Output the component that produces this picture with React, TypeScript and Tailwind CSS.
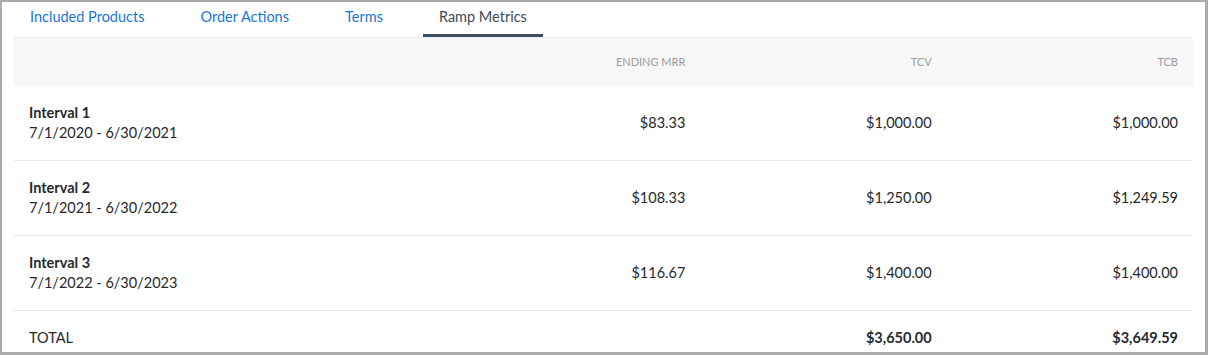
import React, { useState } from "react";

type Interval = {
  label: string;
  range: string;
  endingMrr: string;
  tcv: string;
  tcb: string;
};

const tabs = ["Included Products", "Order Actions", "Terms", "Ramp Metrics"];

const intervals: Interval[] = [
  { label: "Interval 1", range: "7/1/2020 - 6/30/2021", endingMrr: "$83.33", tcv: "$1,000.00", tcb: "$1,000.00" },
  { label: "Interval 2", range: "7/1/2021 - 6/30/2022", endingMrr: "$108.33", tcv: "$1,250.00", tcb: "$1,249.59" },
  { label: "Interval 3", range: "7/1/2022 - 6/30/2023", endingMrr: "$116.67", tcv: "$1,400.00", tcb: "$1,400.00" },
];

const cols = "grid grid-cols-[440px_1fr_1fr_1fr]";

export default function App() {
  const [activeTab, setActiveTab] = useState("Ramp Metrics");

  return (
    <div
      className="w-[1208px] h-[355px] overflow-hidden bg-white border-l-2 border-t-2 border-r-[3px] border-b-[3px] border-[#ababab] px-3 text-[#25292d]"
      style={{ fontFamily: "Lato, 'Open Sans', sans-serif" }}
    >
      {/* Tabs */}
      <div className="flex gap-6 h-[35px]">
        {tabs.map((tab) => {
          const active = tab === activeTab;
          return (
            <button
              key={tab}
              type="button"
              onClick={() => setActiveTab(tab)}
              className={
                active
                  ? "px-4 h-full flex items-start pt-[4px] text-[14.5px] text-[#3f4a56] border-b-[3px] border-[#3d4d60]"
                  : "px-4 h-full flex items-start pt-[4px] text-[14.5px] text-[#1b76d2] border-b-[3px] border-transparent"
              }
            >
              {tab}
            </button>
          );
        })}
      </div>

      {/* Header */}
      <div className={`${cols} h-[49px] items-center bg-[#f7f7f7] border-t border-[#ececec] text-[11px] uppercase text-[#9c9c9c]`}>
        <div />
        <div className="text-right pr-[15px]">Ending MRR</div>
        <div className="text-right pr-[15px]">TCV</div>
        <div className="text-right pr-[15px]">TCB</div>
      </div>

      {/* Interval rows */}
      {intervals.map((row) => (
        <div key={row.label} className={`${cols} h-[75px] items-center border-b border-[#e9e9e9] text-[14.5px]`}>
          <div className="pl-[15px] leading-[20px]">
            <div className="font-bold">{row.label}</div>
            <div>{row.range}</div>
          </div>
          <div className="text-right pr-[15px] -mt-[1px]">{row.endingMrr}</div>
          <div className="text-right pr-[15px] -mt-[1px]">{row.tcv}</div>
          <div className="text-right pr-[15px] -mt-[1px]">{row.tcb}</div>
        </div>
      ))}

      {/* Totals */}
      <div className={`${cols} h-[53px] items-center text-[14.5px]`}>
        <div className="pl-[15px]">TOTAL</div>
        <div />
        <div className="text-right pr-[15px] font-bold">$3,650.00</div>
        <div className="text-right pr-[15px] font-bold">$3,649.59</div>
      </div>
    </div>
  );
}
